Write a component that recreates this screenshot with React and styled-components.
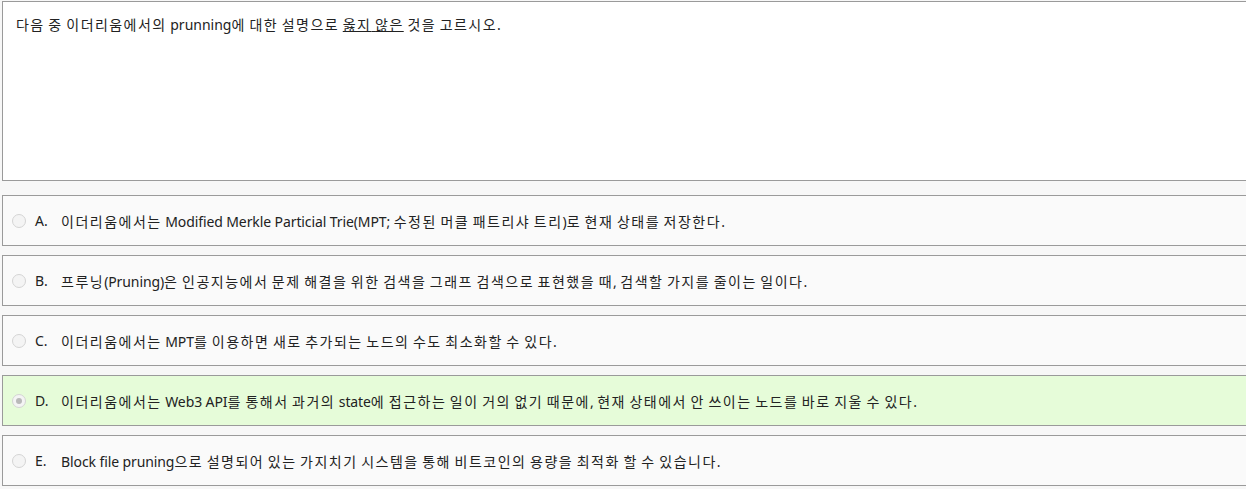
import React from "react";
import styled, { createGlobalStyle } from "styled-components";

const Global = createGlobalStyle`
  html, body { margin: 0; padding: 0; background: #f7f7f7; overflow: hidden; }
  body { font-family: "Noto Sans", "Noto Sans CJK KR", sans-serif; color: #222; }
`;

const Page = styled.div`
  padding: 1px 0 0 2px;
  width: 1262px;
  display: flex;
  flex-direction: column;
`;

const QuestionBox = styled.div`
  box-sizing: border-box;
  height: 180px;
  background: #fff;
  border: 1px solid #9a9a9a;
  padding: 13px 13px;
  font-size: 14px;
  line-height: 20px;
  margin-bottom: 14px;
`;

const Under = styled.span`
  text-decoration: underline;
`;

const Hangul = styled.span`
  letter-spacing: ${(p) => p.$ls}px;
`;

const OptionList = styled.div`
  display: flex;
  flex-direction: column;
  gap: 9px;
`;

const Option = styled.label`
  box-sizing: border-box;
  height: 51px;
  display: flex;
  align-items: center;
  border: 1px solid #9a9a9a;
  background: ${(p) => (p.$selected ? "#e6fcd9" : "#fafafa")};
  padding-left: 9px;
  font-size: 14px;
`;

const Radio = styled.span`
  box-sizing: border-box;
  width: 14px;
  height: 14px;
  border-radius: 50%;
  border: 1px solid #d4d4d4;
  background: #f4f4f4;
  display: flex;
  align-items: center;
  justify-content: center;
  flex: none;
  &::after {
    content: "";
    display: ${(p) => (p.$checked ? "block" : "none")};
    width: 6px;
    height: 6px;
    border-radius: 50%;
    background: #b9b9b9;
  }
`;

const Letter = styled.span`
  width: 26px;
  margin-left: 9px;
  flex: none;
`;

const Text = styled.span`
  letter-spacing: -0.1px;
`;

function K({ children, ls = 1.5 }) {
  const parts = String(children).split(/([\uAC00-\uD7A3]+)/);
  return parts.map((p, i) =>
    /[\uAC00-\uD7A3]/.test(p) ? (
      <Hangul key={i} $ls={ls}>
        {p}
      </Hangul>
    ) : (
      <React.Fragment key={i}>{p}</React.Fragment>
    )
  );
}

const options = [
  ["A.", "이더리움에서는 Modified Merkle Particial Trie(MPT; 수정된 머클 패트리샤 트리)로 현재 상태를 저장한다."],
  ["B.", "프루닝(Pruning)은 인공지능에서 문제 해결을 위한 검색을 그래프 검색으로 표현했을 때, 검색할 가지를 줄이는 일이다."],
  ["C.", "이더리움에서는 MPT를 이용하면 새로 추가되는 노드의 수도 최소화할 수 있다."],
  ["D.", "이더리움에서는 Web3 API를 통해서 과거의 state에 접근하는 일이 거의 없기 때문에, 현재 상태에서 안 쓰이는 노드를 바로 지울 수 있다."],
  ["E.", "Block file pruning으로 설명되어 있는 가지치기 시스템을 통해 비트코인의 용량을 최적화 할 수 있습니다."],
];

export default function App() {
  return (
    <>
      <Global />
      <Page>
        <QuestionBox>
          <K ls={1.45}>다음 중 이더리움에서의 prunning에 대한 설명으로 </K>
          <Under>
            <K ls={1.45}>옳지 않은</K>
          </Under>
          <K ls={1.45}> 것을 고르시오.</K>
        </QuestionBox>
        <OptionList>
          {options.map(([l, t]) => (
            <Option key={l} $selected={l === "D."}>
              <Radio $checked={l === "D."} />
              <Letter>{l}</Letter>
              <Text>
                <K>{t}</K>
              </Text>
            </Option>
          ))}
        </OptionList>
      </Page>
    </>
  );
}
